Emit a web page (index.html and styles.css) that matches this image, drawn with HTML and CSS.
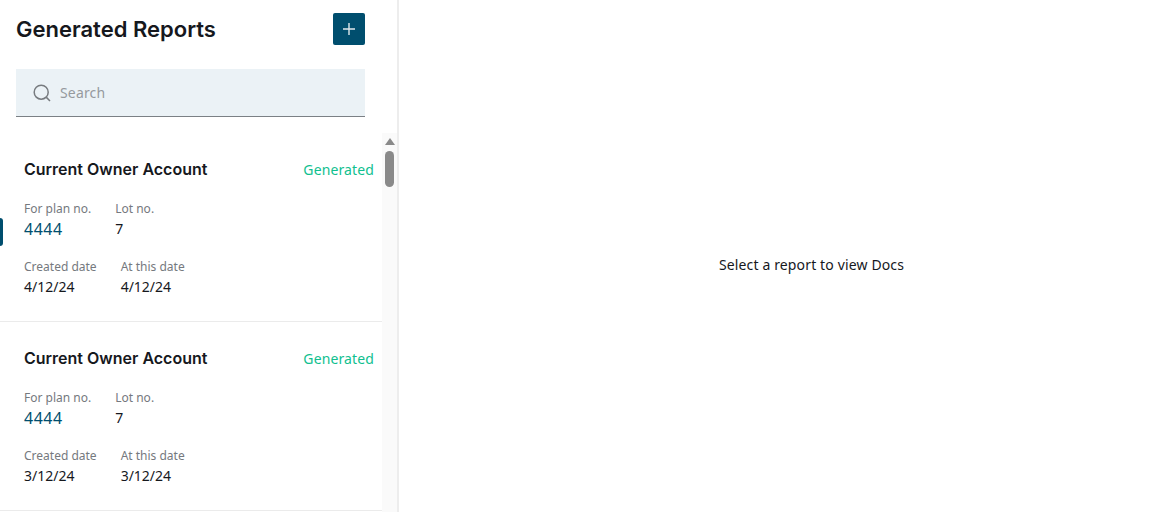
FILE: index.html
```html
<!DOCTYPE html>
<html lang="en">
<head>
<meta charset="utf-8">
<title>Generated Reports</title>
<link rel="stylesheet" href="styles.css">
</head>
<body>
<div class="app">
  <aside class="sidebar">
    <header class="head">
      <h1 class="title">Generated Reports</h1>
      <button class="add" aria-label="Add">
        <svg width="14" height="14" viewBox="0 0 14 14"><path d="M7 1v12M1 7h12" stroke="#dfe8ec" stroke-width="1.4" fill="none"/></svg>
      </button>
    </header>
    <div class="search">
      <svg class="search-icon" width="20" height="20" viewBox="0 0 20 20"><circle cx="9.2" cy="9.2" r="7" stroke="#777b7f" stroke-width="1.5" fill="none"/><path d="M14.4 14.4l3.6 3.6" stroke="#777b7f" stroke-width="1.5" fill="none"/></svg>
      <span class="placeholder">Search</span>
    </div>
    <div class="scroller">
      <div class="list">
        <article class="card">
          <span class="marker"></span>
          <div class="card-top">
            <h2 class="card-title">Current Owner Account</h2>
            <span class="status">Generated</span>
          </div>
          <div class="row row-a">
            <div class="field"><div class="label">For plan no.</div><div class="value link">4444</div></div>
            <div class="field"><div class="label">Lot no.</div><div class="value">7</div></div>
          </div>
          <div class="row row-b">
            <div class="field"><div class="label">Created date</div><div class="value">4/12/24</div></div>
            <div class="field"><div class="label">At this date</div><div class="value">4/12/24</div></div>
          </div>
        </article>
        <article class="card">
          <div class="card-top">
            <h2 class="card-title">Current Owner Account</h2>
            <span class="status">Generated</span>
          </div>
          <div class="row row-a">
            <div class="field"><div class="label">For plan no.</div><div class="value link">4444</div></div>
            <div class="field"><div class="label">Lot no.</div><div class="value">7</div></div>
          </div>
          <div class="row row-b">
            <div class="field"><div class="label">Created date</div><div class="value">3/12/24</div></div>
            <div class="field"><div class="label">At this date</div><div class="value">3/12/24</div></div>
          </div>
        </article>
      </div>
      <div class="scrollbar">
        <span class="arrow"></span>
        <span class="thumb"></span>
      </div>
    </div>
  </aside>
  <main class="viewer">Select a report to view Docs</main>
</div>
</body>
</html>
```
FILE: styles.css
```css
* { box-sizing: border-box; }
html, body { margin: 0; height: 100%; overflow: hidden; background: #fff; }
body { font-family: "Noto Sans", sans-serif; color: #16181d; }
.app { display: flex; width: 1156px; height: 512px; }
.sidebar {
  width: 399px;
  flex: none;
  border-right: 2px solid #ededed;
  display: flex;
  flex-direction: column;
  height: 512px;
  overflow: hidden;
}
.head {
  display: flex;
  justify-content: space-between;
  align-items: flex-start;
  padding: 13px 32px 0 16px;
  height: 69px;
}
.title {
  margin: 0;
  font-family: Inter, sans-serif;
  font-size: 22px;
  font-weight: 600;
  line-height: 32px;
  color: #16181d;
}
.add {
  width: 32px;
  height: 32px;
  padding: 0;
  border: 0;
  border-radius: 2px;
  background: #004e6e;
  display: flex;
  align-items: center;
  justify-content: center;
}
.search {
  margin: 0 32px 0 16px;
  height: 48px;
  background: #ebf2f6;
  border-bottom: 1px solid #7b8085;
  display: flex;
  align-items: center;
  padding-left: 16px;
  gap: 8px;
}
.search-icon { flex: none; }
.placeholder { font-size: 14px; color: #969a9e; letter-spacing: 0.15px; }
.scroller {
  margin-top: 16px;
  flex: 1;
  display: flex;
  min-height: 0;
}
.list { width: 382px; flex: none; overflow: hidden; }
.card {
  position: relative;
  height: 189px;
  padding: 24px 8px 0 24px;
  border-bottom: 1px solid #ebebeb;
}
.marker {
  position: absolute;
  left: -3px;
  top: 85px;
  width: 6px;
  height: 28px;
  background: #004e6e;
  border-radius: 4px;
}
.card-top {
  display: flex;
  justify-content: space-between;
  align-items: center;
  height: 24px;
}
.card-title {
  margin: 0;
  font-family: Inter, sans-serif;
  font-size: 16px;
  font-weight: 600;
  line-height: 24px;
  color: #16181d;
}
.status { font-size: 14px; color: #10c08f; line-height: 24px; padding-top: 2px; letter-spacing: 0.12px; }
.row { display: flex; gap: 24px; }
.row-a { margin-top: 20px; }
.row-b { margin-top: 20px; }
.label { font-size: 12px; line-height: 16px; color: #75797e; }
.value { font-size: 14px; line-height: 20px; margin-top: 2px; color: #16181d; }
.link { font-size: 16px; color: #004e6e; letter-spacing: 0.5px; }
.scrollbar {
  width: 15px;
  flex: none;
  background: #fafafa;
  display: flex;
  flex-direction: column;
  align-items: center;
}
.arrow {
  margin-top: 5px;
  width: 0;
  height: 0;
  border-left: 5px solid transparent;
  border-right: 5px solid transparent;
  border-bottom: 7px solid #8a8a8a;
}
.thumb {
  margin-top: 6px;
  width: 9px;
  height: 36px;
  background: #8a8a8a;
  border-radius: 5px;
}
.viewer {
  flex: 1;
  display: flex;
  justify-content: center;
  align-items: flex-start;
  font-size: 14px;
  letter-spacing: 0.14px;
  color: #16181d;
  height: 512px;
  padding-left: 68px;
  padding-top: 255px;
}
```
